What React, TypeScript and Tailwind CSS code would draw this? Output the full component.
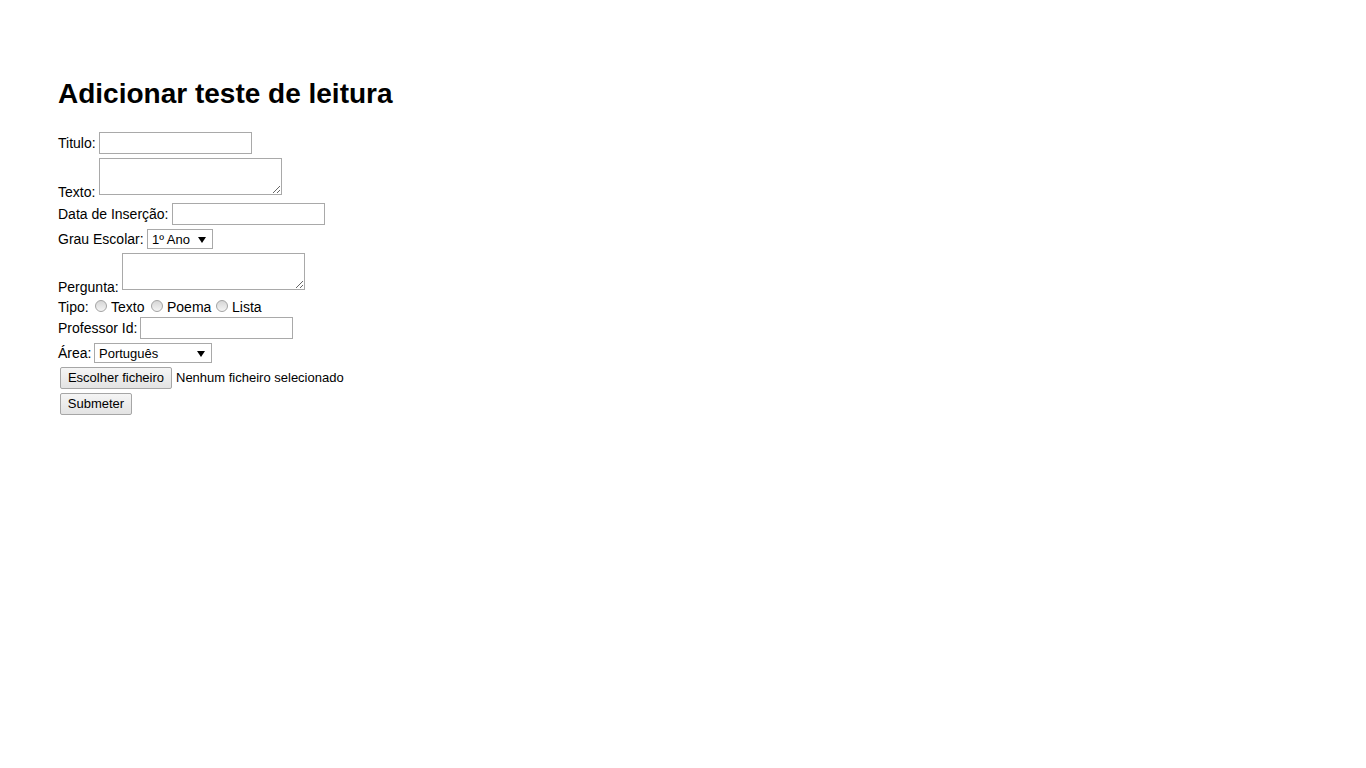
import React from 'react';

const font = { fontFamily: '"Liberation Sans", Arial, sans-serif' };

function Label({ w, mt, children }: { w: string; mt: string; children: React.ReactNode }) {
    return <span className={`${w} ${mt} shrink-0 whitespace-nowrap text-[14px] leading-4`}>{children}</span>;
}

function TextInput({ w }: { w: string }) {
    return <input type="text" className={`${w} h-[22px] shrink-0 border border-[#a9a9a9] bg-white px-[2px] text-[13px] outline-none`} />;
}

function TextArea() {
    return <textarea className="w-[183px] h-[37px] shrink-0 border border-[#a9a9a9] bg-white p-[2px] text-[13px] outline-none" />;
}

function Select({ w, value }: { w: string; value: string }) {
    return (
        <div className={`relative ${w} h-[20px] shrink-0 border border-[#a9a9a9] bg-white`}>
            <span className="block pl-[4px] pt-[1px] text-[13px] leading-[18px] whitespace-nowrap">{value}</span>
            {/* arrow */}
            <svg className="absolute right-[6px] top-[7px]" width="8" height="6" viewBox="0 0 8 6">
                <path d="M0 0 H8 L4 6 Z" fill="#000" />
            </svg>
        </div>
    );
}

function Radio() {
    return <span className="mt-[1px] w-3 h-3 shrink-0 rounded-full border border-[#a3a3a3] bg-linear-to-b from-[#d6d6d6] to-[#f4f4f4]" />;
}

function Button({ w, children }: { w: string; children: React.ReactNode }) {
    return (
        <button className={`${w} h-[22px] ml-[2px] shrink-0 rounded-[2px] border border-[#a6a6a6] bg-linear-to-b from-[#f5f5f5] to-[#e3e3e3] text-[13px] leading-[20px] text-black`}>
            {children}
        </button>
    );
}

export default function App() {
    return (
        <div className="min-h-screen bg-white text-black pt-[78px] pl-[58px]" style={font}>
            <h1 className="text-[28px] font-bold leading-8">Adicionar teste de leitura</h1>

            <form className="mt-[22px] flex flex-col" onSubmit={(e) => e.preventDefault()}>
                {/* Titulo */}
                <div className="flex items-start h-[26px]">
                    <Label w="w-[41px]" mt="mt-[3px]">Titulo:</Label>
                    <TextInput w="w-[153px]" />
                </div>

                {/* Texto */}
                <div className="flex items-start h-[45px]">
                    <Label w="w-[41px]" mt="mt-[26px]">Texto:</Label>
                    <TextArea />
                </div>

                {/* Data de Inserção */}
                <div className="flex items-start h-[26px]">
                    <Label w="w-[114px]" mt="mt-[3px]">Data de Inserção:</Label>
                    <TextInput w="w-[153px]" />
                </div>

                {/* Grau Escolar */}
                <div className="flex items-start h-[24px]">
                    <Label w="w-[89px]" mt="mt-[2px]">Grau Escolar:</Label>
                    <Select w="w-[66px]" value="1º Ano" />
                </div>

                {/* Pergunta */}
                <div className="flex items-start h-[46px]">
                    <Label w="w-[64px]" mt="mt-[26px]">Pergunta:</Label>
                    <TextArea />
                </div>

                {/* Tipo */}
                <div className="flex items-start h-[18px] text-[14px] leading-4">
                    <span className="w-[37px] shrink-0">Tipo:</span>
                    <Radio />
                    <span className="ml-[4px] w-[40px] shrink-0">Texto</span>
                    <Radio />
                    <span className="ml-[4px] w-[49px] shrink-0">Poema</span>
                    <Radio />
                    <span className="ml-[4px]">Lista</span>
                </div>

                {/* Professor Id */}
                <div className="flex items-start h-[26px]">
                    <Label w="w-[82px]" mt="mt-[3px]">Professor Id:</Label>
                    <TextInput w="w-[153px]" />
                </div>

                {/* Área */}
                <div className="flex items-start h-[24px]">
                    <Label w="w-[36px]" mt="mt-[2px]">Área:</Label>
                    <Select w="w-[118px]" value="Português" />
                </div>

                {/* File */}
                <div className="flex items-start h-[26px]">
                    <Button w="w-[112px]">Escolher ficheiro</Button>
                    <span className="ml-[4px] text-[13px] leading-[22px] whitespace-nowrap">Nenhum ficheiro selecionado</span>
                </div>

                {/* Submit */}
                <div className="flex items-start h-[26px]">
                    <Button w="w-[72px]">Submeter</Button>
                </div>
            </form>
        </div>
    );
}
